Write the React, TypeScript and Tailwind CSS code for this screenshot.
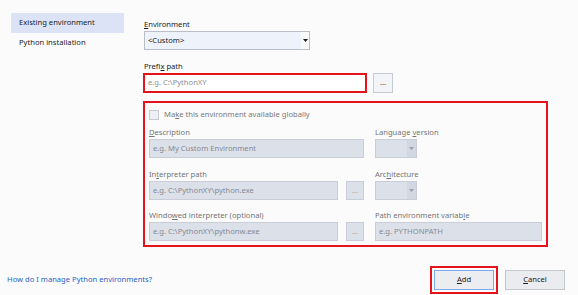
import React from "react";

const U = ({ children }: { children: React.ReactNode }) => (
  <span className="underline underline-offset-[1px] decoration-[0.5px]">{children}</span>
);

const Arrow = ({ color }: { color: string }) => (
  <svg width="5" height="3" viewBox="0 0 5 3">
    <path d="M0 0 H5 L2.5 3 Z" fill={color} />
  </svg>
);

const DisabledInput = ({ text, w }: { text: string; w: string }) => (
  <div className={`${w} h-[19px] border border-[#c8cdd8] bg-[#dce0e9] pl-[3px] flex items-center text-[#868a93]`}>
    {text}
  </div>
);

const DisabledDots = () => (
  <div className="w-[18px] h-[19px] border border-[#c8cdd8] bg-[#dce0e9] flex items-center justify-center text-[#a3a7b0] ml-[8px]">
    ...
  </div>
);

const DisabledSelect = () => (
  <div className="w-[42px] h-[19px] border border-[#c8cdd8] bg-[#dce0e9] flex">
    <div className="flex-1" />
    <div className="w-[9px] bg-[#d2d7e2] flex items-center justify-center">
      <Arrow color="#9ba0aa" />
    </div>
  </div>
);

const Label = ({ children }: { children: React.ReactNode }) => (
  <div className="h-[13px] leading-[13px] text-[#747474]">{children}</div>
);

export default function App() {
  return (
    <div className="w-[578px] h-[295px] bg-[#fbfbfb] font-['Noto_Sans',sans-serif] text-[7.6px] text-[#1b1b1b] flex flex-col overflow-hidden">
      <div className="flex">
        <div className="w-[143px] pl-[11px] pt-[13px] flex flex-col">
          <div className="w-[113px] h-[20px] bg-[#dde3f6] pl-[8px] flex items-center">Existing environment</div>
          <div className="w-[113px] h-[20px] pl-[8px] flex items-center">Python installation</div>
        </div>
        <div className="w-[405px] pt-[18px] flex flex-col">
          <div className="h-[13px] leading-[13px] pl-[1px]">
            <U>E</U>nvironment
          </div>
          <div className="ml-[1px] w-[166px] h-[19px] border border-[#b9bec9] bg-[#eef2fb] flex">
            <div className="flex-1 pl-[3px] flex items-center">&lt;Custom&gt;</div>
            <div className="w-[8px] bg-[#f8f9fb] flex items-center justify-center">
              <Arrow color="#1b1b1b" />
            </div>
          </div>
          <div className="mt-[10px] h-[13px] leading-[13px] pl-[1px]">
            Prefi<U>x</U> path
          </div>
          <div className="flex">
            <div className="w-[224px] h-[20px] border-2 border-[#e5141c] bg-white pl-[3px] flex items-center text-[#8e8e8e]">
              e.g. C:\PythonXY
            </div>
            <div className="ml-[6px] w-[20px] h-[20px] border border-[#c6cad3] bg-[#f3f4f7] flex items-center justify-center text-[#444]">
              ...
            </div>
          </div>
          <div className="mt-[8px] w-[405px] h-[146px] border-2 border-[#e5141c] px-[4px] pt-[7px] flex flex-col">
            <div className="flex items-center h-[10px]">
              <div className="w-[10px] h-[10px] border border-[#c6cad2] bg-[#eff0f3]" />
              <div className="ml-[5px] text-[#7a7a7a]">
                Ma<U>k</U>e this environment available globally
              </div>
            </div>
            <div className="mt-[6px] flex">
              <div className="w-[215px] flex flex-col">
                <Label>
                  <U>D</U>escription
                </Label>
                <DisabledInput text="e.g. My Custom Environment" w="w-[215px]" />
                <div className="mt-[10px]">
                  <Label>
                    In<U>t</U>erpreter path
                  </Label>
                </div>
                <div className="flex">
                  <DisabledInput text="e.g. C:\PythonXY\python.exe" w="w-[189px]" />
                  <DisabledDots />
                </div>
                <div className="mt-[9px]">
                  <Label>
                    Windo<U>w</U>ed interpreter (optional)
                  </Label>
                </div>
                <div className="flex">
                  <DisabledInput text="e.g. C:\PythonXY\pythonw.exe" w="w-[189px]" />
                  <DisabledDots />
                </div>
              </div>
              <div className="ml-[11px] w-[167px] flex flex-col">
                <Label>
                  Language <U>v</U>ersion
                </Label>
                <DisabledSelect />
                <div className="mt-[10px]">
                  <Label>
                    Arc<U>h</U>itecture
                  </Label>
                </div>
                <DisabledSelect />
                <div className="mt-[9px]">
                  <Label>
                    Path environment variab<U>l</U>e
                  </Label>
                </div>
                <DisabledInput text="e.g. PYTHONPATH" w="w-[167px]" />
              </div>
            </div>
          </div>
        </div>
      </div>
      <div className="mt-auto mb-[1px] h-[28px] flex items-center pl-[7px] pr-[13px]">
        <div className="text-[#1f63c6]">How do I manage Python environments?</div>
        <div className="ml-auto border-2 border-[#e5141c] p-[2px]">
          <div className="w-[60px] h-[20px] border border-[#7ba7ee] bg-[#ebedf1] flex items-center justify-center">
            <U>A</U>dd
          </div>
        </div>
        <div className="ml-[7px] w-[60px] h-[20px] border border-[#c4c7cd] bg-[#ebecf0] flex items-center justify-center">
          <U>C</U>ancel
        </div>
      </div>
    </div>
  );
}
